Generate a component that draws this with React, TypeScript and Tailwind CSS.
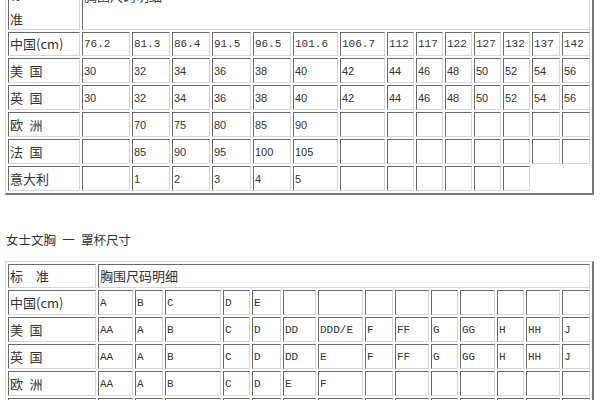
import React from "react";

const CJK = "font-['Noto_Sans_CJK_SC',sans-serif] text-[13px] leading-[18px]";
const tableCls =
  "border-separate border-spacing-[2px] table-fixed w-[589px] ml-[5px] border-solid border-t-[1px] border-l-[1px] border-r-[2px] border-b-[2px] border-t-[#d4d4d4] border-l-[#d4d4d4] border-r-[#767676] border-b-[#767676]";
const cell =
  "border border-solid border-t-[#6a6a6a] border-l-[#6a6a6a] border-r-[#d6d6d6] border-b-[#d6d6d6] p-0 pl-[1px] align-middle text-left text-[#333] whitespace-nowrap overflow-hidden";
const numCls = "font-['Liberation_Mono',monospace] text-[11px] leading-[14px]";
const sansNum = "font-['Liberation_Sans',sans-serif] text-[11px] leading-[14px]";

const w1 = ["w-[72px]", "w-[48px]", "w-[38px]", "w-[38px]", "w-[39px]", "w-[38px]", "w-[45px]", "w-[45px]", "w-[27px]", "w-[27px]", "w-[27px]", "w-[27px]", "w-[27px]", "w-[28px]", "w-[28px]"];
const w2 = ["w-[88px]", "w-[35px]", "w-[28px]", "w-[56px]", "w-[27px]", "w-[29px]", "w-[33px]", "w-[45px]", "w-[28px]", "w-[34px]", "w-[27px]", "w-[35px]", "w-[27px]", "w-[34px]", "w-[28px]"];

type Row = { label: string; vals: (string | null)[]; font: string; h: string };

const t1: Row[] = [
  { label: "中国(cm)", vals: ["76.2", "81.3", "86.4", "91.5", "96.5", "101.6", "106.7", "112", "117", "122", "127", "132", "137", "142"], font: numCls, h: "h-[24px]" },
  { label: "美\u2002国", vals: ["30", "32", "34", "36", "38", "40", "42", "44", "46", "48", "50", "52", "54", "56"], font: sansNum, h: "h-[25px]" },
  { label: "英\u2002国", vals: ["30", "32", "34", "36", "38", "40", "42", "44", "46", "48", "50", "52", "54", "56"], font: sansNum, h: "h-[25px]" },
  { label: "欧\u2002洲", vals: ["", "70", "75", "80", "85", "90", "", "", "", "", "", "", "", ""], font: sansNum, h: "h-[25px]" },
  { label: "法\u2002国", vals: ["", "85", "90", "95", "100", "105", "", "", "", "", "", "", "", ""], font: sansNum, h: "h-[25px]" },
  { label: "意大利", vals: ["", "1", "2", "3", "4", "5", "", "", "", "", "", "", null, null], font: sansNum, h: "h-[25px]" },
];

const t2: Row[] = [
  { label: "中国(cm)", vals: ["A", "B", "C", "D", "E", "", "", "", "", "", "", "", "", ""], font: numCls, h: "h-[25px]" },
  { label: "美\u2002国", vals: ["AA", "A", "B", "C", "D", "DD", "DDD/E", "F", "FF", "G", "GG", "H", "HH", "J"], font: numCls, h: "h-[25px]" },
  { label: "英\u2002国", vals: ["AA", "A", "B", "C", "D", "DD", "E", "F", "FF", "G", "GG", "H", "HH", "J"], font: numCls, h: "h-[25px]" },
  { label: "欧\u2002洲", vals: ["AA", "A", "B", "C", "D", "E", "F", "", "", "", "", "", "", ""], font: numCls, h: "h-[25px]" },
  { label: "", vals: ["", "", "", "", "", "", "", "", "", "", "", "", "", ""], font: numCls, h: "h-[25px]" },
];

function Body({ rows }: { rows: Row[] }) {
  return (
    <>
      {rows.map((r, i) => (
        <tr key={i} className={r.h}>
          <td className={`${cell} ${CJK}`}>{r.label}</td>
          {r.vals.map((v, j) =>
            v === null ? (
              <td key={j} className="p-0"></td>
            ) : (
              <td key={j} className={`${cell} ${r.font}`}>{v}</td>
            )
          )}
        </tr>
      ))}
    </>
  );
}

export default function App() {
  return (
    <div className="w-[600px] h-[400px] overflow-hidden bg-white">
      <div className="-mt-[25px]">
        <table className={tableCls}>
          <colgroup>
            {w1.map((w, i) => (
              <col key={i} className={w} />
            ))}
          </colgroup>
          <tbody>
            <tr className="h-[52px]">
              <td className={`${cell} ${CJK} align-bottom`}>
                <div className="leading-[30px]">标</div>
                <div className="leading-[20px]">准</div>
              </td>
              <td colSpan={14} className={`${cell} ${CJK} align-bottom pb-[16px]`}>
                胸围尺码明细
              </td>
            </tr>
            <Body rows={t1} />
          </tbody>
        </table>
        <div className="ml-[6px] mt-[36px] font-['Noto_Sans_CJK_SC',sans-serif] text-[12.5px] leading-[18px] text-[#333]">
          女士文胸{"\u2002"}一{"\u2002"}罩杯尺寸
        </div>
        <div className="mt-[12px]">
          <table className={tableCls}>
            <colgroup>
              {w2.map((w, i) => (
                <col key={i} className={w} />
              ))}
            </colgroup>
            <tbody>
              <tr className="h-[24px]">
                <td className={`${cell} ${CJK}`}>标{"\u2002\u2002"}准</td>
                <td colSpan={14} className={`${cell} ${CJK}`}>
                  胸围尺码明细
                </td>
              </tr>
              <Body rows={t2} />
            </tbody>
          </table>
        </div>
      </div>
    </div>
  );
}
